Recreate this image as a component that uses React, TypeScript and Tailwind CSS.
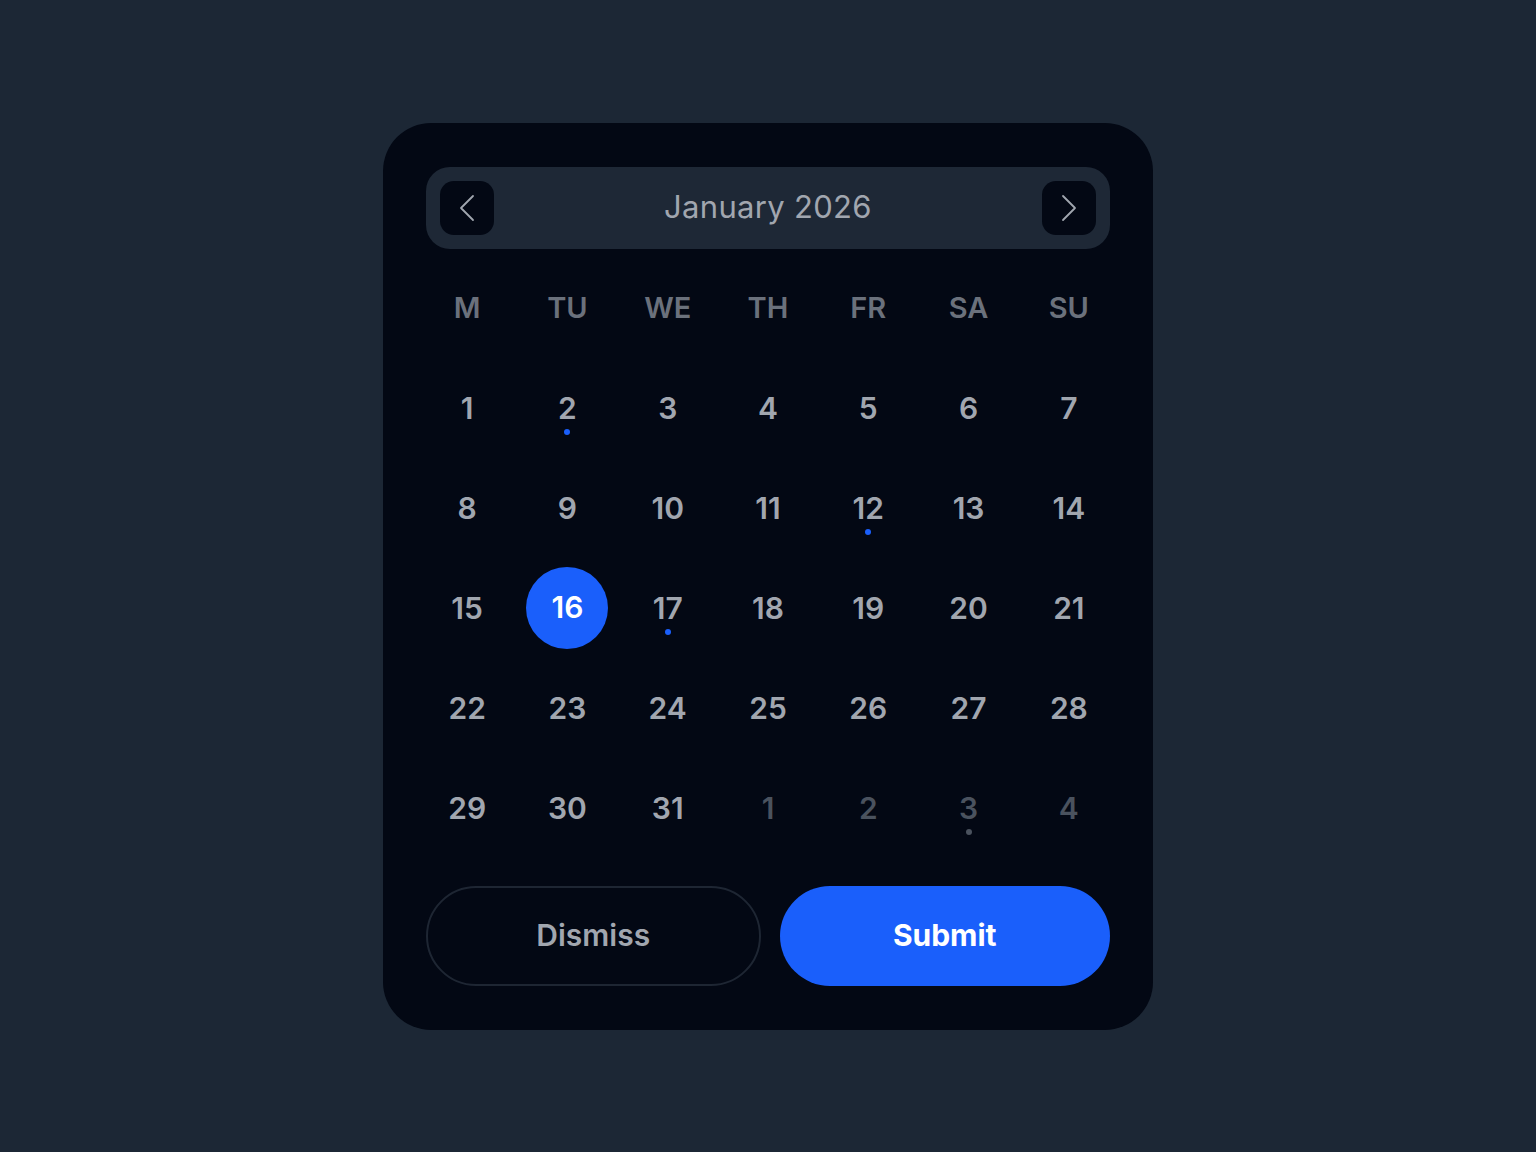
import { ChevronLeft, ChevronRight } from "lucide-react"

type Day = { n: number; muted?: boolean; dot?: boolean; selected?: boolean }

const weekdays = ["M", "TU", "WE", "TH", "FR", "SA", "SU"]

const days: Day[] = [
  ...Array.from({ length: 31 }, (_, i) => ({
    n: i + 1,
    dot: [2, 12, 17].includes(i + 1),
    selected: i + 1 === 16,
  })),
  { n: 1, muted: true },
  { n: 2, muted: true },
  { n: 3, muted: true, dot: true },
  { n: 4, muted: true },
]

function DayCell({ day }: { day: Day }) {
  return (
    <div className="h-[100px] flex items-center justify-center">
      {day.selected ? (
        <div className="w-[82px] h-[82px] rounded-full bg-[#1a5ffb] flex items-center justify-center text-white text-[30px] font-semibold">
          {day.n}
        </div>
      ) : (
        <div className="relative flex items-center justify-center">
          <span
            className={`text-[30px] font-semibold leading-none ${
              day.muted ? "text-[#4a525e]" : "text-[#a1a6af]"
            }`}
          >
            {day.n}
          </span>
          {day.dot && (
            <span
              className={`absolute left-1/2 -translate-x-1/2 top-[36px] w-[6px] h-[6px] rounded-full ${
                day.muted ? "bg-[#4a525e]" : "bg-[#1a5ffb]"
              }`}
            />
          )}
        </div>
      )}
    </div>
  )
}

export default function App() {
  return (
    <div
      className="min-h-screen w-full bg-[#1c2735] flex items-center justify-center"
      style={{ fontFamily: "Inter, 'Noto Sans', sans-serif" }}
    >
      <div className="w-[770px] bg-[#030814] rounded-[48px] px-[43px] pt-[44px] pb-[44px]">
        <div className="h-[82px] rounded-[24px] bg-[#1e2836] flex items-center justify-between px-[14px]">
          <button className="w-[54px] h-[54px] rounded-[14px] bg-[#030814] flex items-center justify-center text-[#a1a6af]">
            <ChevronLeft size={48} strokeWidth={0.9} />
          </button>
          <span className="text-[31px] text-[#a1a6af] tracking-[0.01em]">January 2026</span>
          <button className="w-[54px] h-[54px] rounded-[14px] bg-[#030814] flex items-center justify-center text-[#a1a6af]">
            <ChevronRight size={48} strokeWidth={0.9} />
          </button>
        </div>

        <div className="-mx-[9px] mt-[9px] grid grid-cols-7">
          {weekdays.map((w) => (
            <div
              key={w}
              className="h-[100px] flex items-center justify-center text-[29px] font-semibold text-[#6b717c]"
            >
              {w}
            </div>
          ))}
          {days.map((d, i) => (
            <DayCell key={i} day={d} />
          ))}
        </div>

        <div className="mt-[28px] flex gap-[19px]">
          <button className="flex-1 h-[100px] rounded-full border-2 border-[#1e2633] text-[30px] font-semibold text-[#a1a6af]">
            Dismiss
          </button>
          <button className="flex-1 h-[100px] rounded-full bg-[#1a5ffb] text-[30px] font-bold text-white">
            Submit
          </button>
        </div>
      </div>
    </div>
  )
}
